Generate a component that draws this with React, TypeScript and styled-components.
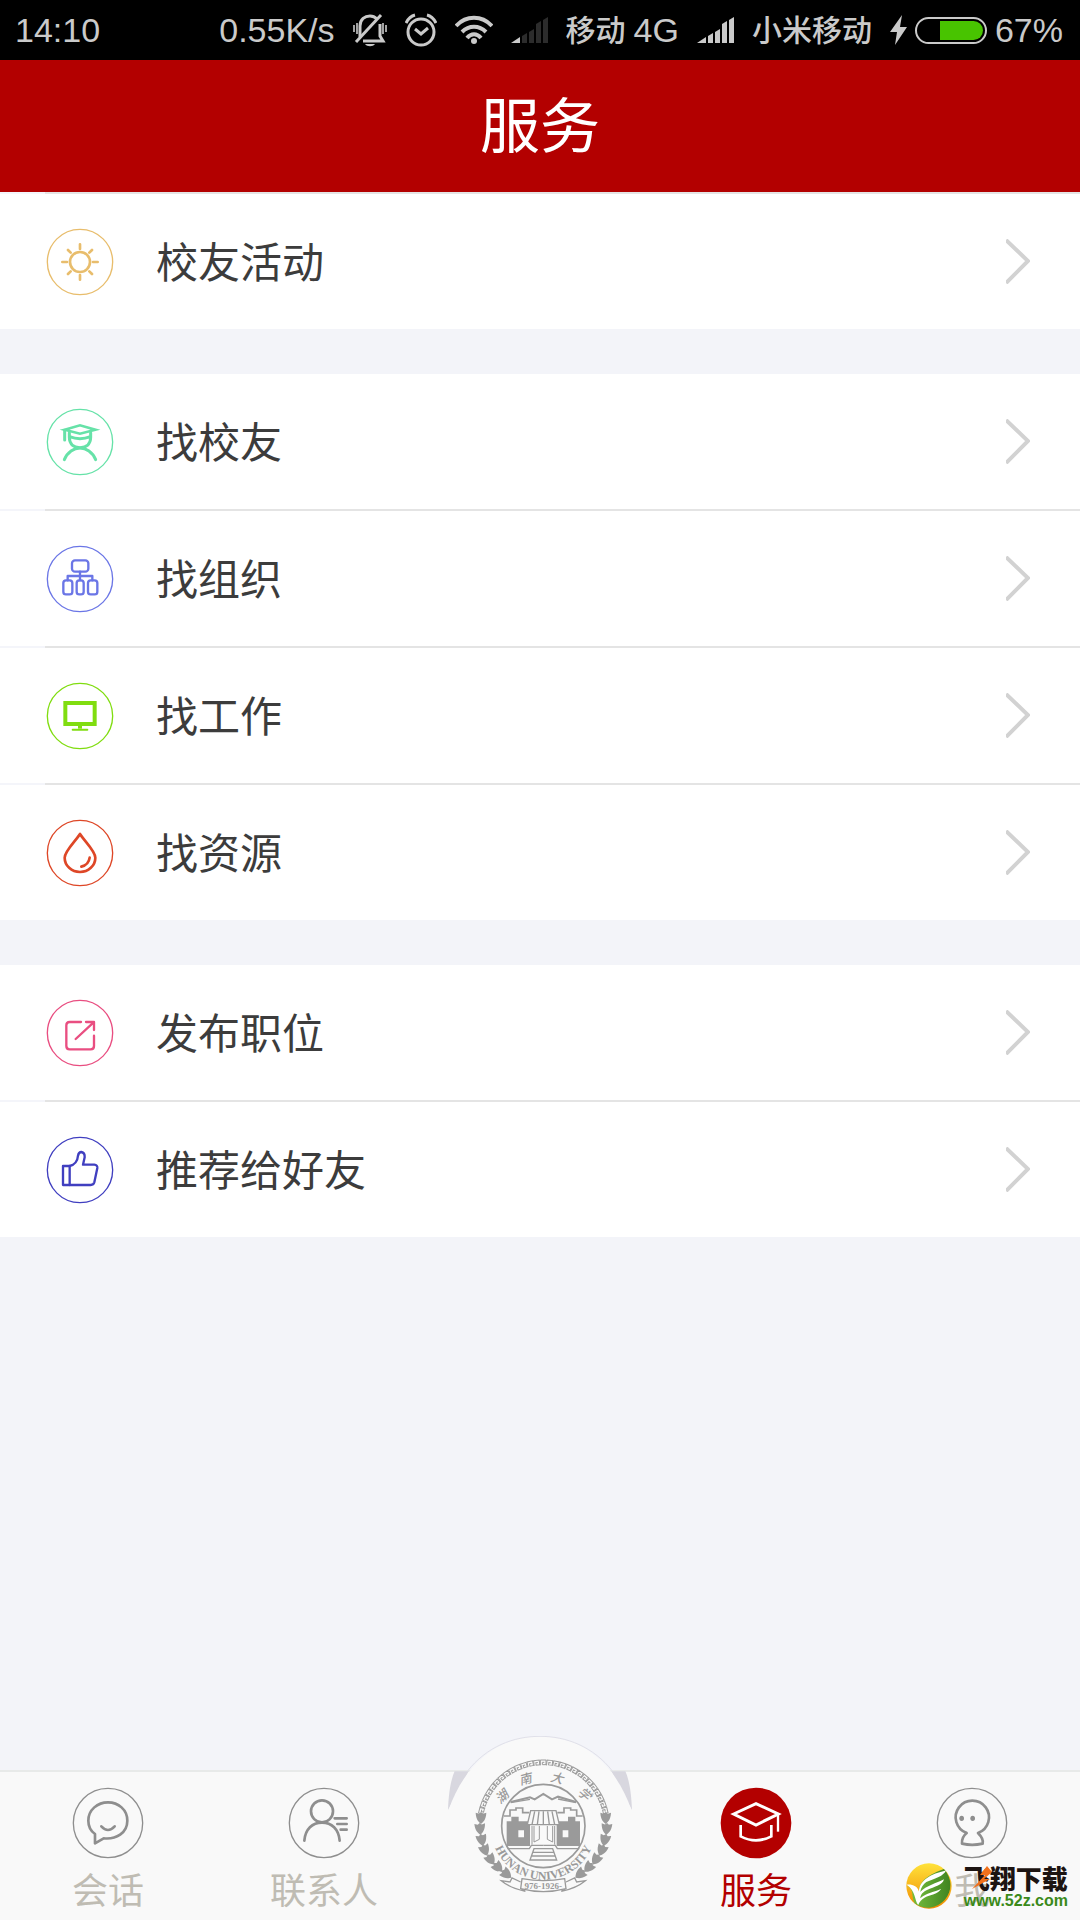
import React from "react";
import styled, { createGlobalStyle } from "styled-components";

const RED = "#b30000";
const GREY = "#8e8e8e";
const CREST = "#9a9a9a";

const GlobalStyle = createGlobalStyle`
  *, *::before, *::after { box-sizing: border-box; }
  body {
    margin: 0;
    background: #f3f4f9;
    font-family: "Noto Sans CJK SC", "Noto Sans", sans-serif;
  }
  ul { list-style: none; margin: 0; padding: 0; }
`;

const Screen = styled.div`
  display: flex;
  flex-direction: column;
  min-height: 100vh;
`;

/* ---------- status bar ---------- */

const StatusBar = styled.div`
  display: flex;
  align-items: center;
  justify-content: space-between;
  height: 60px;
  padding: 0 17px 0 15px;
  background: #000;
  color: #cacaca;
  white-space: nowrap;
`;

const StatusGroup = styled.div<{ $gap: number }>`
  display: flex;
  align-items: center;
  gap: ${(p) => p.$gap}px;
  svg { display: block; flex: none; }
`;

const Latin = styled.span`
  font: 34px/60px "Liberation Sans", Arial, sans-serif;
`;

const Carrier = styled.span`
  padding-bottom: 4px;
  font-size: 30px;
  line-height: 56px;
  font-weight: 500;
`;

const BatteryShell = styled.div`
  display: flex;
  justify-content: flex-end;
  width: 72px;
  height: 27px;
  padding: 2px;
  border: 2px solid #cacaca;
  border-radius: 14px;
`;

const BatteryLevel = styled.div`
  width: 67%;
  border-radius: 0 10px 10px 0;
  background: #48c400;
`;

/* ---------- header and list ---------- */

const Header = styled.header`
  display: flex;
  align-items: center;
  justify-content: center;
  height: 132px;
  padding-bottom: 8px;
  background: ${RED};
`;

const Title = styled.h1`
  margin: 0;
  color: #fff;
  font-size: 60px;
  line-height: 88px;
  font-weight: 400;
`;

const Main = styled.main`
  display: flex;
  flex: 1;
  flex-direction: column;
  gap: 45px;
`;

const Group = styled.ul<{ $topLine?: boolean }>`
  li + li,
  li:first-child {
    border-top: 2px solid transparent;
    background:
      linear-gradient(#fff, #fff) padding-box,
      linear-gradient(90deg, #f4f5fa 45px, #e4e4e4 45px) border-box;
  }
  li:first-child {
    border-top-width: ${(p) => (p.$topLine ? 2 : 0)}px;
  }
`;

const Row = styled.button`
  display: flex;
  align-items: center;
  width: 100%;
  height: 135px;
  padding: 0 50px 0 46px;
  border: 0;
  background: transparent;
  color: #3c3c3c;
  font-family: inherit;
  text-align: left;
  cursor: pointer;
  svg { display: block; flex: none; }
`;

const RowLabel = styled.span`
  flex: 1;
  padding: 0 0 4px 42px;
  font-size: 42px;
  line-height: 60px;
`;

/* ---------- bottom navigation ---------- */

const TabBar = styled.nav`
  position: relative;
  display: grid;
  grid-template-columns: repeat(5, 1fr);
  height: 150px;
  border-top: 2px solid #e8eae9;
  background: #f9f9f9;
`;

const Tab = styled.a<{ $active?: boolean }>`
  display: flex;
  flex-direction: column;
  align-items: center;
  padding-top: 15px;
  color: ${(p) => (p.$active ? RED : "#bfbcb3")};
  font-size: 36px;
  line-height: 58px;
  text-decoration: none;
  svg { display: block; }
`;

const EmblemLink = styled.a`
  position: absolute;
  left: 50%;
  bottom: 0;
  transform: translateX(-50%);
  svg { display: block; }
`;

const Watermark = styled.div`
  position: absolute;
  right: 12px;
  bottom: 10px;
  display: flex;
  align-items: center;
  gap: 12px;
  svg { display: block; }
`;

const WatermarkText = styled.div`
  position: relative;
  display: flex;
  flex-direction: column;
  padding-top: 2px;
`;

const WatermarkName = styled.span`
  color: #1c1412;
  font-size: 26px;
  line-height: 28px;
  font-weight: 900;
`;

const WatermarkSite = styled.span`
  color: #3b8a1a;
  font: bold 16px/18px "Liberation Sans", Arial, sans-serif;
`;

const WatermarkBolt = styled.svg`
  position: absolute;
  left: 8px;
  top: 4px;
`;

/* ---------- drawings ---------- */

function SilentIcon() {
  return (
    <svg width="34" height="34" viewBox="0 0 34 34" fill="none" stroke="#cacaca" strokeWidth="3">
      <path d="M7 24V13C7 6 12 3 17 3c3 0 5 1 7 3M27 11v12l3 5H10" />
      <path d="M3 29 28 2" />
      <path d="M12 31c2 3 8 3 10 0z" fill="#cacaca" stroke="none" />
      <path d="M1 12v7M4 10v11M30 10v11M33 12v7" strokeWidth="1.600" />
    </svg>
  );
}

function AlarmIcon() {
  return (
    <svg width="32" height="34" viewBox="0 0 32 34" fill="none" stroke="#cacaca" strokeWidth="3">
      <circle cx="16" cy="19" r="13" />
      <path d="m10 16 6 5 7-6" />
      <path d="M1 10c2-4 5-7 9-8M31 10c-2-4-5-7-9-8" />
    </svg>
  );
}

function WifiIcon() {
  return (
    <svg width="38" height="30" viewBox="0 0 38 30" fill="none" stroke="#cacaca" strokeWidth="4">
      <path d="M1 11c10-11 26-11 36 0M7 17c7-7 17-7 24 0M12 23c4-5 10-5 14 0" />
      <circle cx="19" cy="26" r="3" fill="#cacaca" stroke="none" />
    </svg>
  );
}

function SignalIcon({ level }: { level: number }) {
  const bars = ["M0 26 9 20v6z", "M11 19l5-3v10h-5z", "M18 15l5-3v14h-5z", "M25 7l5-3v22h-5z", "M32 3l5-3v26h-5z"];
  return (
    <svg width="37" height="26" viewBox="0 0 37 26">
      {bars.map((d, i) => (
        <path key={d} d={d} fill={i < level ? "#cacaca" : "#2c2c2c"} />
      ))}
    </svg>
  );
}

function BoltIcon() {
  return (
    <svg width="17" height="30" viewBox="0 0 17 30">
      <path d="M12 0 0 17h7L5 30 17 12h-7z" fill="#cacaca" />
    </svg>
  );
}

function Chevron() {
  return (
    <svg width="24" height="45" viewBox="0 0 24 45" fill="none" stroke="#d2d2d2" strokeWidth="4">
      <path d="M0 1 22 22 0 44" />
    </svg>
  );
}

function RoundIcon({ color, stroke, children }: { color: string; stroke: number; children: React.ReactNode }) {
  return (
    <svg width="68" height="68" viewBox="-102 -102 204 204" fill="none" stroke={color} strokeLinecap="round" strokeLinejoin="round">
      <circle r="98" strokeWidth="4" />
      <g strokeWidth={stroke}>{children}</g>
    </svg>
  );
}

const SunIcon = () => (
  <RoundIcon color="#e8bd6c" stroke={8}>
    <circle r="30" />
    <path d="M0-53v14M0 39v14M-53 0h14M39 0h14M-36-36l8 8M28 28l8 8M-36 36l8-8M28-28l8-8" />
  </RoundIcon>
);

const GraduateIcon = () => (
  <RoundIcon color="#66e2a8" stroke={9}>
    <path d="M-46-37 0-50 46-37 0-25z" strokeLinejoin="miter" strokeWidth="8" />
    <path d="M-46-35v29" />
    <path d="M-32-28v14C-32 8-17 17 0 17S32 8 32-14v-14M-31-16Q0-4 31-16" />
    <path d="M-47 53C-38 30-18 18 0 18S38 30 47 53" />
  </RoundIcon>
);

const OrgIcon = () => (
  <RoundIcon color="#6b76e6" stroke={7}>
    <rect x="-24" y="-56" width="49" height="34" rx="9" />
    <path d="M0-22V4M-37 4V-9H37V4" />
    <rect x="-50" y="4" width="27" height="42" rx="8" />
    <rect x="-10" y="4" width="21" height="42" rx="8" />
    <rect x="24" y="4" width="28" height="42" rx="8" />
  </RoundIcon>
);

const MonitorIcon = () => (
  <RoundIcon color="#80dd10" stroke={12}>
    <rect x="-44" y="-39" width="88" height="63" strokeLinejoin="miter" />
    <path d="M0 30v8" strokeLinecap="butt" />
    <path d="M-22 41h44" strokeWidth="6" />
  </RoundIcon>
);

const DropIcon = () => (
  <RoundIcon color="#de4727" stroke={8}>
    <path d="M0-57C-13-36-46-6-46 14A46 43 0 0 0 46 14C46-6 13-36 0-57Z" />
    <path d="M29 14Q26 36 4 41" />
  </RoundIcon>
);

const ShareIcon = () => (
  <RoundIcon color="#e94e81" stroke={7}>
    <path d="M3-33H-31Q-41-33-41-23V39Q-41 49-31 49H32Q42 49 42 39V8" />
    <path d="M18-33H42V-9M40-31-13 18" />
  </RoundIcon>
);

const ThumbIcon = () => (
  <RoundIcon color="#403fc0" stroke={7}>
    <path d="M-51-12H-31C-16-15-7-28-6-43Q-4-54 4-54Q15-52 14-38L9-16H43Q53-15 52-6L43 37Q41 45 32 45H-51Z" />
    <path d="M-31-12V45" />
  </RoundIcon>
);

function TabIcon({ filled, children }: { filled?: boolean; children: React.ReactNode }) {
  return (
    <svg width="72" height="72" viewBox="-108 -108 216 216" fill="none" stroke={filled ? "#fff" : GREY} strokeWidth="8" strokeLinecap="round" strokeLinejoin="round">
      <circle r={filled ? 106 : 104} fill={filled ? RED : "none"} stroke={filled ? "none" : GREY} strokeWidth="4" />
      {children}
    </svg>
  );
}

const ChatTabIcon = () => (
  <TabIcon>
    <path d="M-39 61V33C-54 22-59 8-59-7C-59-40-31-62 0-62S58-40 58-7C58 30 24 50-13 46Z" />
    <path d="M-20 10Q0 32 20 10" />
  </TabIcon>
);

const ContactsTabIcon = () => (
  <TabIcon>
    <circle cx="-6" cy="-35" r="33" />
    <path d="M-59 53C-56 18-35-1-6-1S44 18 47 53M32-14H68M40 3H68M50 20H68" />
  </TabIcon>
);

const ServiceTabIcon = () => (
  <TabIcon filled>
    <g strokeLinejoin="miter" strokeLinecap="butt">
      <path d="M-67-27 0-58 67-27 0 6Z" strokeWidth="9" />
      <path d="M66-27V26" strokeWidth="7" />
      <path d="M-46 6V40Q0 64 46 40V6" />
    </g>
  </TabIcon>
);

const MeTabIcon = () => (
  <TabIcon>
    <path d="M-16 30A50 50 0 1 1 18 30C28 40 34 54 32 62Q0 69-30 62C-31 50-26 38-16 30" />
    <g fill={GREY} stroke="none">
      <ellipse cx="-31" cy="-14" rx="7" ry="8" />
      <ellipse cx="2" cy="-14" rx="7" ry="8" />
    </g>
  </TabIcon>
);

const LEAVES = [
  [153, 292, 0],
  [150, 325, -4],
  [155, 358, -12],
  [164, 389, -22],
  [181, 417, -32],
  [203, 441, -42],
  [228, 461, -52],
];

function HalfWreath() {
  return (
    <g fill={CREST} stroke="none">
      {LEAVES.map(([x, y, a]) => (
        <path key={y} transform={`translate(${x} ${y}) rotate(${a})`} d="M0 20C-6 14-15 8-16-14L-6-11 0-16 6-11 16-14C15 8 6 14 0 20Z" />
      ))}
    </g>
  );
}

function HalfGate() {
  return (
    <g>
      <path d="M222 288H240V270H258V264H278V278H298" strokeWidth="5" />
      <path d="M230 378V304H244V290H266V304H300V378ZM265 331V352H282V331Z" fill={CREST} fillRule="evenodd" stroke="none" />
      <path d="M232 386H298L304 376H340" />
      <path d="M306 318V374M312 318V366L328 358V318" strokeWidth="3" />
    </g>
  );
}

function Emblem() {
  const keys = Array.from({ length: 27 }, (_, i) => -76 + (i * 152) / 26);
  const characters: [string, number, number, number][] = [
    ["湖", 216, 230, -42],
    ["南", 286, 178, -14],
    ["大", 381, 174, 14],
    ["学", 463, 222, 42],
  ];
  return (
    <svg width="220" height="184" viewBox="0 48 660 552" fill="none" stroke={CREST} strokeWidth="4">
      <path d="M74 154C62 180 56 220 54 270L116 154ZM586 154C598 180 604 220 606 270L544 154Z" fill="#d8d7df" stroke="none" />
      <path d="M56 270C96 150 190 49 330 49S564 150 604 270V600H56Z" fill="#f9f9f9" stroke="none" />
      <path d="M112 154C170 80 250 49 330 49S490 80 548 154" stroke="#e0e0e9" strokeWidth="3" />
      {keys.map((a) => (
        <path key={a} transform={`translate(340 318) rotate(${a}) translate(0 -190)`} d="M-9 8V-8H8V6H-3V-1H3" strokeWidth="3" />
      ))}
      {characters.map(([c, x, y, a]) => (
        <text
          key={c}
          transform={`translate(${x} ${y}) rotate(${a})`}
          y="13"
          textAnchor="middle"
          fill={CREST}
          stroke="none"
          fontSize="38"
          fontStyle="italic"
          fontWeight="500"
          fontFamily="'Noto Sans CJK SC', sans-serif"
        >
          {c}
        </text>
      ))}
      <circle cx="340" cy="318" r="125" strokeWidth="5" />
      <path d="M242 246 300 232 314 238 340 222 366 238 384 230 438 246" strokeWidth="6" />
      <path d="M242 248 300 238M384 237 438 248" />
      <HalfGate />
      <g transform="translate(680 0) scale(-1 1)">
        <HalfGate />
      </g>
      <path d="M302 272H378L388 314H292Z" fill="#f9f9f9" />
      <path d="M314 274 306 314M327 274 322 314M340 274V314M353 274 358 314M366 274 374 314" />
      <path d="M312 386H368L380 420H300ZM308 397H372M304 408H376" />
      <HalfWreath />
      <g transform="translate(680 0) scale(-1 1)">
        <HalfWreath />
      </g>
      <path id="emblem-arc" d="M184 340A157 157 0 0 0 496 340" stroke="none" />
      <text fill={CREST} stroke="none" fontSize="36" fontWeight="bold" fontFamily="'Liberation Serif', serif" textAnchor="middle">
        <textPath href="#emblem-arc" startOffset="50%">HUNAN UNIVERSITY</textPath>
      </text>
      <path d="M272 486 246 474 240 486 214 482Q240 504 286 514L272 504M408 486 434 474 440 486 466 482Q440 504 394 514L408 504" />
      <path d="M276 476Q340 488 404 476L408 506Q340 524 272 506Z" fill="#f9f9f9" />
      <text x="340" y="507" fill={CREST} stroke="none" fontSize="27" fontWeight="bold" fontFamily="'Liberation Serif', serif" textAnchor="middle">
        976-1926-
      </text>
    </svg>
  );
}

function LeafLogo() {
  return (
    <svg width="46" height="46" viewBox="0 0 136 136">
      <defs>
        <linearGradient id="leaf-gold" x1="0" y1="0" x2="0" y2="1">
          <stop offset="0" stopColor="#ffe23a" />
          <stop offset="1" stopColor="#f08a00" />
        </linearGradient>
        <linearGradient id="leaf-green" x1="0" y1="0" x2="1" y2="0">
          <stop offset="0" stopColor="#7cc540" />
          <stop offset="1" stopColor="#3f8420" />
        </linearGradient>
      </defs>
      <circle cx="68" cy="68" r="67" fill="url(#leaf-gold)" />
      <path d="M112 18A67 67 0 0 1 26 120C14 96 26 84 4 66L22 70 38 86C40 50 70 34 112 18Z" fill="url(#leaf-green)" />
      <path d="M2 64C18 62 34 68 38 84C40 50 74 32 118 22C112 38 86 46 60 56C52 62 44 72 42 86C60 66 90 60 112 48C110 64 84 70 62 80C50 86 44 92 42 104C60 88 84 86 104 76C96 92 70 94 56 102C46 108 40 114 36 124C24 108 30 84 2 64Z" fill="#fff" />
    </svg>
  );
}

/* ---------- page ---------- */

const GROUPS = [
  [{ label: "校友活动", Icon: SunIcon }],
  [
    { label: "找校友", Icon: GraduateIcon },
    { label: "找组织", Icon: OrgIcon },
    { label: "找工作", Icon: MonitorIcon },
    { label: "找资源", Icon: DropIcon },
  ],
  [
    { label: "发布职位", Icon: ShareIcon },
    { label: "推荐给好友", Icon: ThumbIcon },
  ],
];

export default function App() {
  return (
    <Screen>
      <GlobalStyle />
      <StatusBar>
        <Latin>14:10</Latin>
        <StatusGroup $gap={18}>
          <Latin>0.55K/s</Latin>
          <SilentIcon />
          <AlarmIcon />
          <WifiIcon />
          <SignalIcon level={1} />
          <StatusGroup $gap={8}>
            <Carrier>移动</Carrier>
            <Latin>4G</Latin>
          </StatusGroup>
          <SignalIcon level={5} />
          <Carrier>小米移动</Carrier>
          <StatusGroup $gap={8}>
            <BoltIcon />
            <BatteryShell>
              <BatteryLevel />
            </BatteryShell>
            <Latin>67%</Latin>
          </StatusGroup>
        </StatusGroup>
      </StatusBar>
      <Header>
        <Title>服务</Title>
      </Header>
      <Main>
        {GROUPS.map((rows, i) => (
          <Group key={i} $topLine={i === 0}>
            {rows.map(({ label, Icon }) => (
              <li key={label}>
                <Row type="button">
                  <Icon />
                  <RowLabel>{label}</RowLabel>
                  <Chevron />
                </Row>
              </li>
            ))}
          </Group>
        ))}
      </Main>
      <TabBar>
        <Tab href="#chat">
          <ChatTabIcon />
          会话
        </Tab>
        <Tab href="#contacts">
          <ContactsTabIcon />
          联系人
        </Tab>
        <span />
        <Tab href="#services" $active aria-current="page">
          <ServiceTabIcon />
          服务
        </Tab>
        <Tab href="#me">
          <MeTabIcon />
          我
        </Tab>
        <EmblemLink href="#home" aria-label="湖南大学">
          <Emblem />
        </EmblemLink>
        <Watermark>
          <LeafLogo />
          <WatermarkText>
            <WatermarkName>飞翔下载</WatermarkName>
            <WatermarkSite>www.52z.com</WatermarkSite>
            <WatermarkBolt width="20" height="24" viewBox="0 0 20 24">
              <path d="M15 0 8 9h5L0 23 18 13h-6L20 6z" fill="#f0701c" />
            </WatermarkBolt>
          </WatermarkText>
        </Watermark>
      </TabBar>
    </Screen>
  );
}
